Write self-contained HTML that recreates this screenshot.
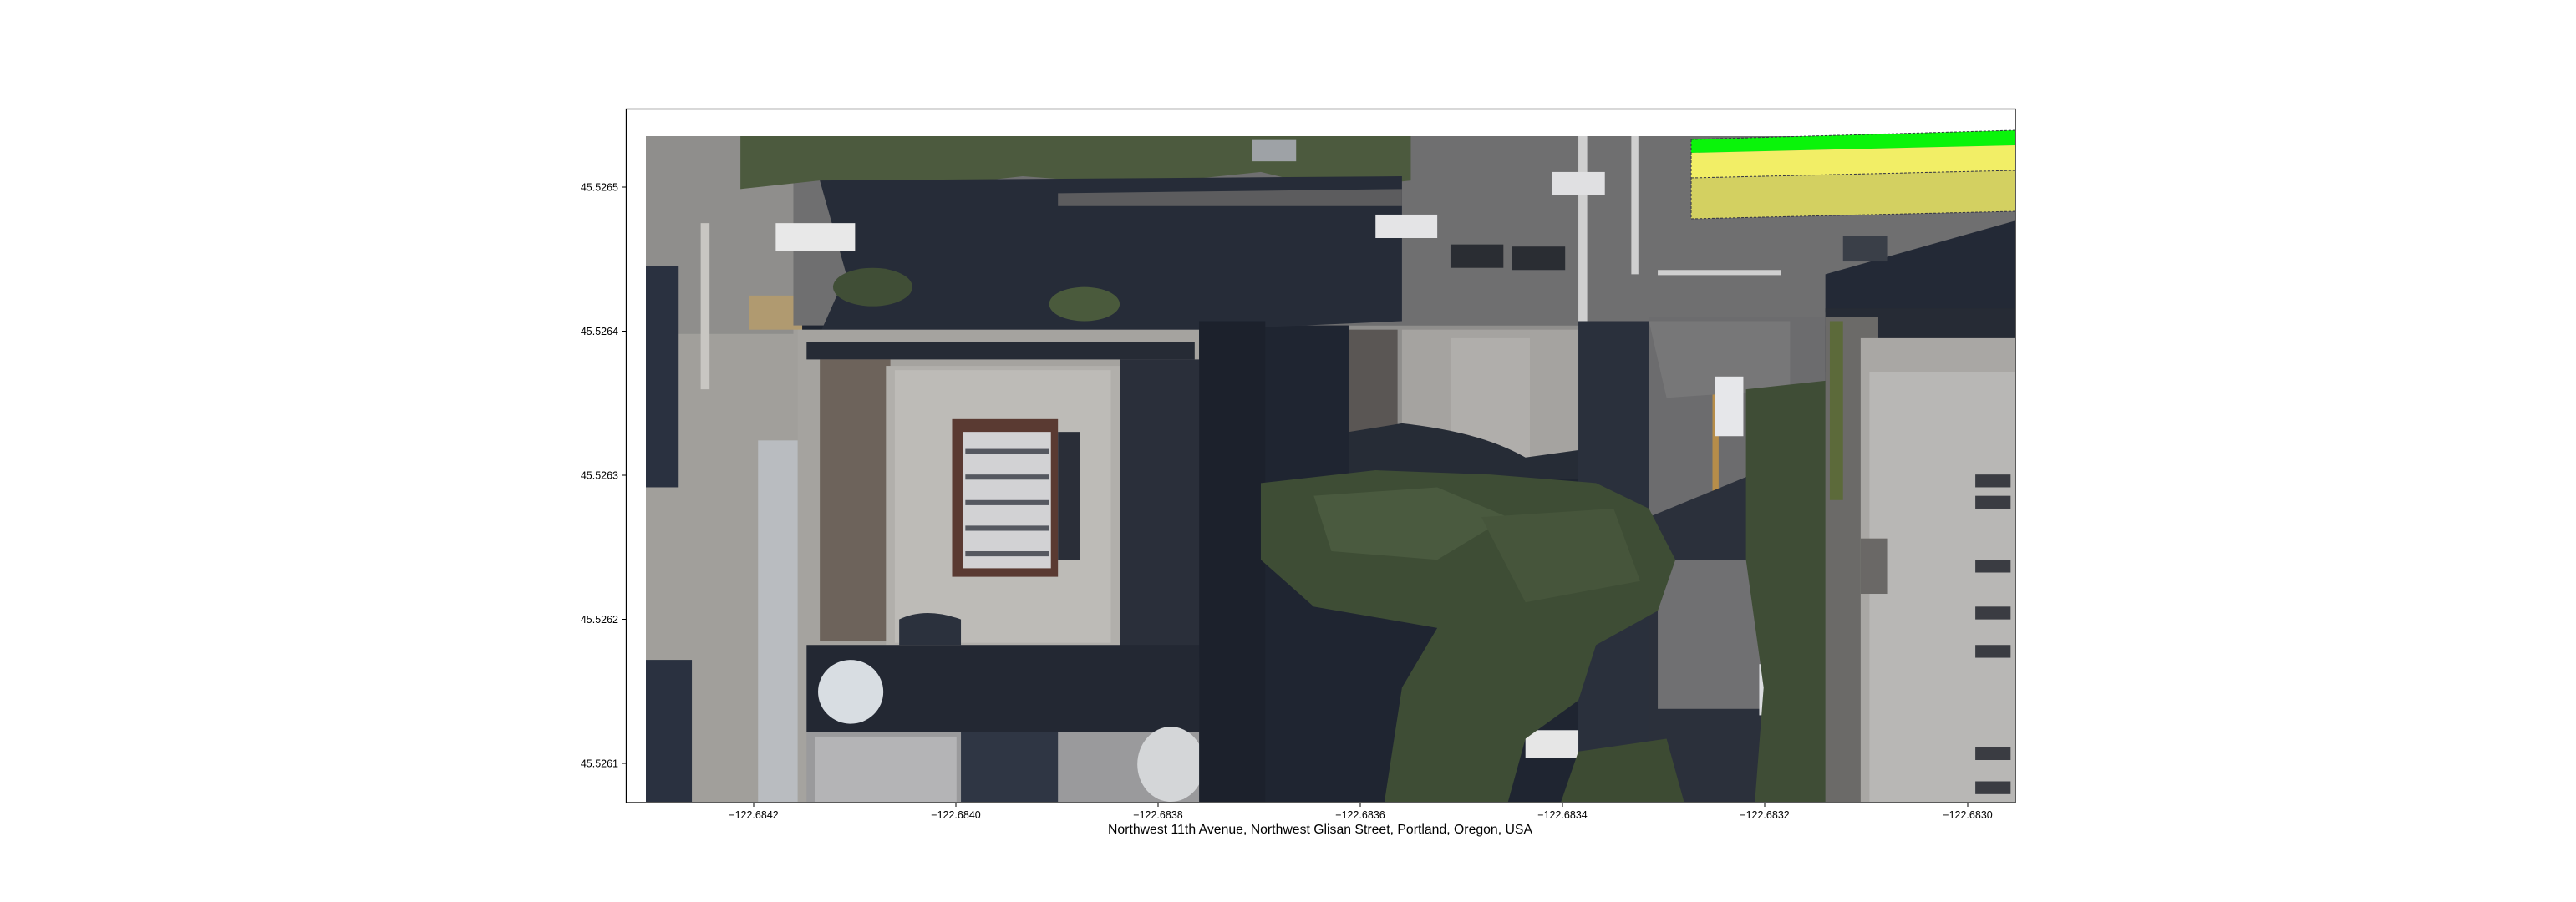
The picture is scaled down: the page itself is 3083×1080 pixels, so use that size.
<!DOCTYPE html>
<html><head><meta charset="utf-8"><style>
html,body{margin:0;padding:0;background:#fff;}
svg{display:block;}
text{font-family:"Liberation Sans","DejaVu Sans",sans-serif;fill:#000;}
</style></head><body>
<svg width="3083" height="1080" viewBox="0 0 3083 1080" xmlns="http://www.w3.org/2000/svg">
<defs><clipPath id="c"><rect x="773" y="163" width="1639" height="797"/></clipPath></defs>
<rect width="3083" height="1080" fill="#fff"/>
<g clip-path="url(#c)">
<g transform="translate(770,160) scale(1.0557,0.5102)">
<rect x="0" y="0" width="1570" height="1570" fill="#1f2531"/>
<!-- left sidewalk -->
<rect x="0" y="0" width="180" height="1570" fill="#a19f9b"/>
<rect x="0" y="0" width="170" height="470" fill="#8f8e8c"/>
<rect x="0" y="310" width="40" height="520" fill="#2a3140"/>
<rect x="0" y="1235" width="55" height="335" fill="#2a3140"/>
<rect x="130" y="720" width="45" height="850" fill="#b9bcc0"/>
<rect x="65" y="210" width="10" height="390" fill="#c8c6c2"/>
<rect x="120" y="380" width="60" height="80" fill="#b09a70"/>
<!-- top road -->
<rect x="170" y="0" width="1400" height="450" fill="#6f6f70"/>
<rect x="1060" y="0" width="10" height="440" fill="#cfcfcf"/>
<rect x="1120" y="0" width="8" height="330" fill="#cfcfcf"/>
<rect x="1150" y="320" width="140" height="12" fill="#cfcfcf"/>
<rect x="1150" y="430" width="130" height="12" fill="#cfcfcf"/>
<!-- top trees -->
<path d="M110 0 H870 V110 L780 130 L700 90 L560 120 L430 100 L300 130 L200 110 L110 130 Z" fill="#4c5a3e"/>
<!-- shadows under trees -->
<path d="M200 110 L860 100 L860 440 L640 460 L200 470 L230 330 Z" fill="#262c38"/>
<path d="M470 140 L860 130 L860 170 L470 170 Z" fill="#5c5c5e"/>
<circle cx="500" cy="400" r="40" fill="#4a5a3c"/>
<circle cx="260" cy="360" r="45" fill="#404e36"/>
<!-- top-right shadow -->
<path d="M1340 330 L1563 200 L1563 420 L1340 420 Z" fill="#232936"/>
<!-- cars top -->
<rect x="150" y="210" width="90" height="65" fill="#e8e8e8"/>
<rect x="830" y="190" width="70" height="55" fill="#e4e4e6"/>
<rect x="1030" y="90" width="60" height="55" fill="#e0e0e2"/>
<rect x="915" y="260" width="60" height="55" fill="#2a2d33"/>
<rect x="985" y="265" width="60" height="55" fill="#2a2d33"/>
<rect x="690" y="15" width="50" height="50" fill="#9ea2a6"/>
<rect x="1360" y="240" width="50" height="60" fill="#3a3f48"/>
<!-- building 1 -->
<rect x="175" y="460" width="455" height="1110" fill="#a5a39f"/>
<rect x="185" y="490" width="440" height="40" fill="#262b35"/>
<rect x="200" y="530" width="80" height="660" fill="#6d635b"/>
<rect x="540" y="530" width="90" height="700" fill="#2a2f3a"/>
<rect x="275" y="545" width="265" height="655" fill="#b1afab"/>
<rect x="285" y="555" width="245" height="640" fill="#bdbbb7"/>
<rect x="350" y="670" width="120" height="370" fill="#5a3a32"/>
<rect x="362" y="700" width="100" height="320" fill="#d2d2d4"/>
<g fill="#555860"><rect x="365" y="740" width="95" height="12"/><rect x="365" y="800" width="95" height="12"/><rect x="365" y="860" width="95" height="12"/><rect x="365" y="920" width="95" height="12"/><rect x="365" y="980" width="95" height="12"/></g>
<rect x="470" y="700" width="25" height="300" fill="#2a2e38"/>
<path d="M290 1140 Q320 1110 360 1140 L360 1200 L290 1200 Z" fill="#2b313d"/>
<rect x="185" y="1200" width="445" height="205" fill="#232833"/>
<rect x="185" y="1405" width="450" height="165" fill="#9a9a9c"/>
<rect x="195" y="1415" width="160" height="155" fill="#b4b4b6"/>
<rect x="360" y="1405" width="110" height="165" fill="#2f3644"/>
<ellipse cx="235" cy="1310" rx="37" ry="75" fill="#d8dde2"/>
<ellipse cx="598" cy="1480" rx="38" ry="88" fill="#d4d6d8"/>
<!-- dark gap column -->
<rect x="630" y="440" width="75" height="1130" fill="#1c212c"/>
<!-- building 2 -->
<rect x="800" y="450" width="270" height="360" fill="#8f8e8c"/>
<rect x="860" y="460" width="210" height="300" fill="#a5a3a0"/>
<rect x="800" y="460" width="55" height="240" fill="#5a5654"/>
<rect x="915" y="480" width="90" height="280" fill="#b0aeab"/>
<path d="M860 680 Q950 700 1000 760 L1070 740 L1070 810 L800 810 L800 700 Z" fill="#262c36"/>
<!-- vertical road -->
<rect x="1140" y="430" width="200" height="1140" fill="#6c6c6e"/>
<rect x="1060" y="440" width="80" height="1130" fill="#2a303c"/>
<rect x="1212" y="450" width="7" height="850" fill="#b68d4a"/>
<path d="M1140 440 L1300 440 L1300 600 L1160 620 Z" fill="#777778"/>
<path d="M1140 900 L1280 780 L1280 1570 L1140 1570 Z" fill="#2b303b"/>
<rect x="1150" y="1000" width="140" height="350" fill="#707072"/>
<rect x="1215" y="570" width="32" height="140" fill="#e6e7ea"/>
<rect x="1265" y="1245" width="32" height="120" fill="#dcdde0"/>
<rect x="1268" y="1140" width="22" height="50" fill="#c05050"/>
<rect x="1000" y="1400" width="60" height="65" fill="#e6e6e6"/>
<!-- trees main -->
<path d="M700 820 L830 790 L960 800 L1080 820 L1140 880 L1170 1000 L1150 1120 L1080 1200 L1060 1330 L1000 1420 L980 1570 L840 1570 L860 1300 L900 1160 L760 1110 L700 1000 Z" fill="#3e4d35"/>
<path d="M760 850 L900 830 L980 900 L900 1000 L780 980 Z" fill="#4a5a3f"/>
<path d="M950 900 L1100 880 L1130 1050 L1000 1100 Z" fill="#46553b"/>
<path d="M1250 600 L1340 580 L1345 1570 L1260 1570 L1270 1300 L1250 1000 Z" fill="#3f4d36"/>
<path d="M1060 1450 L1160 1420 L1180 1570 L1040 1570 Z" fill="#3d4b33"/>
<!-- right building -->
<rect x="1340" y="410" width="223" height="150" fill="#262b35"/>
<rect x="1340" y="430" width="60" height="1140" fill="#6b6a68"/>
<rect x="1345" y="440" width="15" height="420" fill="#5c6a3a"/>
<rect x="1380" y="480" width="183" height="1090" fill="#a9a7a4"/>
<rect x="1390" y="560" width="173" height="1010" fill="#b8b7b5"/>
<g fill="#3a3c42"><rect x="1510" y="800" width="40" height="30"/><rect x="1510" y="850" width="40" height="30"/><rect x="1510" y="1000" width="40" height="30"/><rect x="1510" y="1110" width="40" height="30"/><rect x="1510" y="1200" width="40" height="30"/><rect x="1510" y="1440" width="40" height="30"/><rect x="1510" y="1520" width="40" height="30"/></g>
<rect x="1380" y="950" width="30" height="130" fill="#6a6866"/>
</g>
</g>
<!-- overlay -->
<polygon points="2024,167 2412,156 2412,174 2024,183" fill="#0af40a"/>
<polygon points="2024,183 2412,174 2412,204 2024,213" fill="#f2ee66"/>
<polygon points="2024,213 2412,204 2412,253 2024,262" fill="#f0ec5e" fill-opacity="0.78"/>
<polyline points="2024,167 2412,156" stroke="#334" stroke-width="1" stroke-dasharray="3,2" fill="none"/>
<polyline points="2024,213 2412,204" stroke="#334" stroke-width="1" stroke-dasharray="3,2" fill="none"/>
<polyline points="2024,262 2412,253" stroke="#334" stroke-width="1" stroke-dasharray="3,2" fill="none"/>
<line x1="2024" y1="167" x2="2024" y2="262" stroke="#334" stroke-width="1" stroke-dasharray="3,2"/>
<!-- axes frame -->
<rect x="749.5" y="130.5" width="1662.5" height="830.5" fill="none" stroke="#000" stroke-width="1.3"/>
<!-- x ticks -->
<g stroke="#000" stroke-width="1">
<line x1="902" y1="961" x2="902" y2="966"/><line x1="1144" y1="961" x2="1144" y2="966"/><line x1="1386" y1="961" x2="1386" y2="966"/><line x1="1628" y1="961" x2="1628" y2="966"/><line x1="1870" y1="961" x2="1870" y2="966"/><line x1="2112" y1="961" x2="2112" y2="966"/><line x1="2355" y1="961" x2="2355" y2="966"/>
<line x1="744" y1="224" x2="749" y2="224"/><line x1="744" y1="396.5" x2="749" y2="396.5"/><line x1="744" y1="569" x2="749" y2="569"/><line x1="744" y1="741.5" x2="749" y2="741.5"/><line x1="744" y1="914" x2="749" y2="914"/>
</g>
<g font-size="12.5" text-anchor="middle">
<text x="902" y="980">−122.6842</text><text x="1144" y="980">−122.6840</text><text x="1386" y="980">−122.6838</text><text x="1628" y="980">−122.6836</text><text x="1870" y="980">−122.6834</text><text x="2112" y="980">−122.6832</text><text x="2355" y="980">−122.6830</text>
</g>
<g font-size="12.5" text-anchor="end">
<text x="740" y="228.5">45.5265</text><text x="740" y="401">45.5264</text><text x="740" y="573.5">45.5263</text><text x="740" y="746">45.5262</text><text x="740" y="918.5">45.5261</text>
</g>
<text x="1326" y="998" font-size="16" textLength="508" lengthAdjust="spacingAndGlyphs">Northwest 11th Avenue, Northwest Glisan Street, Portland, Oregon, USA</text>
</svg>
</body></html>
